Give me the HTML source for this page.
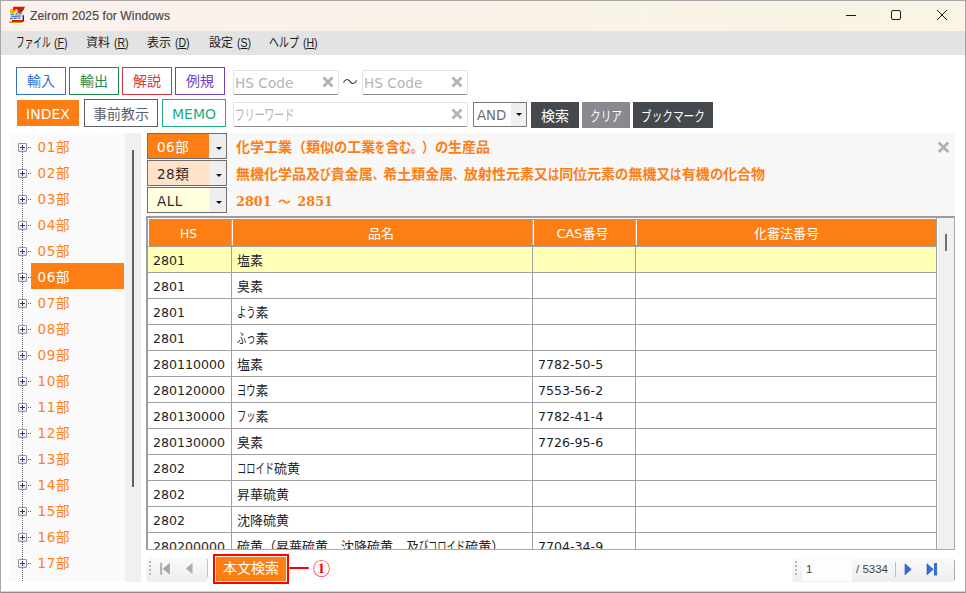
<!DOCTYPE html><html lang="ja"><head><meta charset="utf-8"><title>Zeirom 2025 for Windows</title><style>
html,body{margin:0;padding:0;}
body{width:966px;height:593px;overflow:hidden;background:#fff;position:relative;
 font-family:"DejaVu Sans","Noto Sans CJK JP",sans-serif;font-size:13.33px;color:#222;text-spacing-trim:space-all;}
*{box-sizing:border-box;}
.abs{position:absolute;}
.k{display:inline-block;transform:scaleX(.76);transform-origin:0 50%;white-space:nowrap;}
.k1{margin-right:-.24em}.k2{margin-right:-.48em}.k3{margin-right:-.72em}.k4{margin-right:-.96em}.k5{margin-right:-1.2em}.k6{margin-right:-1.44em}
#grid .k{font-size:14px;line-height:1;transform:scaleX(.66);}#grid .k1{margin-right:-.34em}#grid .k2{margin-right:-.68em}#grid .k4{margin-right:-1.36em}
#frame{left:0;top:0;width:966px;height:593px;border:1px solid #a6a6a6;border-bottom:1px solid #8c8c8c;box-shadow:inset 0 -1px 0 #d4d4d4;pointer-events:none;z-index:50;}
#title{left:1px;top:1px;width:964px;height:30px;background:linear-gradient(90deg,#fbf1ee 0%,#faf2e8 50%,#f9f4e3 100%);}
#title .t{left:29px;top:0;line-height:30px;-webkit-text-stroke:.2px #4a4a4a;font-family:"Liberation Sans","Noto Sans CJK JP",sans-serif;font-size:12.1px;color:#4a4a4a;letter-spacing:.1px;white-space:nowrap;}
#menu{left:1px;top:31px;width:964px;height:24px;background:#e3e3e3;font-family:"Liberation Sans","Noto Sans CJK JP",sans-serif;font-size:12px;color:#1a1a1a;}
#menu span.m{position:absolute;top:0;line-height:24px;white-space:nowrap;}#menu .l{display:inline-block;margin-left:.8px;font-size:12.6px;transform:scaleX(.84);transform-origin:0 50%;white-space:pre;}
.btn{position:absolute;height:28px;line-height:26px;text-align:center;border:1px solid;background:#fff;font-size:14px;white-space:nowrap;}
.inp{position:absolute;height:25px;background:#fff;border:1px solid #e2e2e2;border-bottom:1px solid #8f8f8f;border-radius:2px;color:#b4b4b4;font-size:13.7px;line-height:25px;padding-left:1px;white-space:nowrap;}
.inp .x{position:absolute;right:4px;top:5px;width:12px;height:12px;}
.dbtn{position:absolute;top:102px;height:26px;line-height:28px;color:#fff;text-align:center;font-size:14px;white-space:nowrap;}
#tree{left:9px;top:133px;width:116px;height:449px;background:#fafafa;overflow:hidden;}
#track{left:125px;top:133px;width:16px;height:449px;background:#f0f0f0;}
#thumb{left:132px;top:150px;width:2px;height:337px;background:#606060;}
.ti{position:absolute;left:0;width:116px;height:26px;}
.ti .lbl{position:absolute;left:22px;top:0;height:26px;width:93px;line-height:29px;padding-left:6.5px;letter-spacing:.6px;color:#ff7f1f;font-size:13.5px;white-space:nowrap;}
.ti.sel .lbl{background:#fd7e14;color:#fff;}
.ti .pm{position:absolute;left:9px;top:10px;width:9px;height:9px;border:1px solid #949494;background:linear-gradient(180deg,#fff 40%,#dcdcdc);border-radius:1px;}
.ti .pm:before{content:"";position:absolute;left:1px;top:3px;width:5px;height:1px;background:#1c3a8c;}
.ti .pm:after{content:"";position:absolute;left:3px;top:1px;width:1px;height:5px;background:#1c3a8c;}
.ti .hd{position:absolute;left:19px;top:14px;width:4px;height:1px;background-image:linear-gradient(90deg,#666 50%,transparent 50%);background-size:2px 1px;}
#vdot{left:13px;top:19px;width:1px;height:440px;background-image:linear-gradient(180deg,#666 50%,transparent 50%);background-size:1px 2px;}
#panel{left:147px;top:133px;width:808px;height:83px;background:#f8f8f8;}
.cmb{position:absolute;left:147px;width:80px;height:26px;border:1px solid #6e6e6e;font-size:13.5px;line-height:26px;}
.cmb .v{position:absolute;left:0;top:0;width:61px;height:24px;padding-left:9px;white-space:nowrap;letter-spacing:.5px;}
.cmb .a{position:absolute;left:61px;top:0;width:17px;height:24px;background:#eee;}
.arr{position:absolute;width:0;height:0;border-left:3px solid transparent;border-right:3px solid transparent;border-top:3px solid #111;}
.hl{position:absolute;left:236px;height:26px;line-height:26px;color:#fd7e14;font-weight:bold;font-size:14px;white-space:nowrap;font-family:"DejaVu Serif","Noto Sans CJK JP",sans-serif;}
#grid{left:146px;top:216px;width:809px;height:334px;background:#fff;overflow:hidden;border-left:2px solid #9c9ca0;border-top:2px solid #9c9ca0;border-right:1px solid #a8a8a8;border-bottom:1px solid #a8a8a8;}
#ghead{left:1px;top:1px;width:787px;height:27px;background:#fd7e14;color:#fff;font-size:13px;}
#ghead div{position:absolute;top:0;height:27px;line-height:30px;text-align:center;}
#ghead div.hv{top:1px;height:25px;width:1px;background:#fff;}#ghead div.hg{top:1px;height:25px;width:1px;background:#c8a890;}
#gline{left:0;top:28px;width:789px;height:1px;background:#a0a0a0;}
.row{position:absolute;left:0;width:789px;height:26px;border-bottom:1px solid #a0a0a0;font-size:12.6px;line-height:28px;white-space:nowrap;color:#1e1e1e;}
.row.y{background:#ffffb8;}
.row div{position:absolute;top:0;height:25px;overflow:hidden;}
.row div.n{font-size:13px;}
.vl{position:absolute;top:28px;width:1px;height:304px;background:#a0a0a0;}
#gtrack{left:788px;top:0;width:18px;height:331px;background:#f0f0f0;border-left:1px solid #a0a0a0;box-shadow:inset 1px 0 0 #fff;}
#gthumb{left:797px;top:16px;width:2px;height:17px;background:#707070;}
.tb{position:absolute;background:linear-gradient(180deg,#fafafa,#eeeeee);border-radius:4px;}
</style></head><body>
<div id="title" class="abs">
<svg class="abs" style="left:8px;top:5px" width="17" height="18" viewBox="0 0 17 18">
<path d="M1 3.2 L6 3.2 L6 7 L2 12 L1 12Z" fill="#d9c400"/>
<path d="M0.2 15.4 L13 15.4 L13 17 L0.2 17Z" fill="#b7a600"/>
<path d="M4.2 0.8 L16.2 0.8 L13.6 4.4 L4.2 4.4Z" fill="#ff0000"/>
<path d="M11.5 1.5 L14.5 1.5 L6.5 13 L3.5 13Z" fill="#6a5a00"/>
<path d="M12.5 3 L15 3 L8.5 12 L6 12Z" fill="#e00000"/>
<path d="M3 14 L15 14 L15 15.8 L3 15.8Z" fill="#ff0000"/>
<path d="M0.4 7.2 L13.6 6.4 L15.6 8 L15.6 13.6 L0.2 14Z" fill="#e9eff7" opacity=".8"/>
<path d="M2 8.4 L5 8.2 M6.4 8 L8.6 7.8 M10 7.8 L13 7.6 M1.2 12.6 L4 12.4 M5 12.4 L8 12.2 M9 12.2 L11.4 12.1 M2.4 10.4 L12.4 10" stroke="#3c72b4" stroke-width="1.1" fill="none"/>
<path d="M13.6 9.2 L15 9.2 L15 14.2 L13.6 14.2Z" fill="#1c2a5c"/>
<path d="M6.2 3 L8.6 3 L7.2 4.8Z" fill="#fff"/>
</svg>
<div class="t abs">Zeirom 2025 for Windows</div>
<svg class="abs" style="left:835px;top:0" width="129" height="30" viewBox="0 0 129 30">
<path d="M10 14.5 H20" stroke="#1a1a1a" stroke-width="1" fill="none"/>
<rect x="55.5" y="9.5" width="9" height="9" rx="1.5" stroke="#1a1a1a" stroke-width="1" fill="none"/>
<path d="M101 9 L111 19 M111 9 L101 19" stroke="#1a1a1a" stroke-width="1" fill="none"/>
</svg>
</div>
<div id="menu" class="abs">
<span class="m" style="left:14.5px"><span class="k" style="font-size:13.2px;transform:scaleX(0.655);margin-right:-1.38em">ファイル</span><span class="l"> (<u>F</u>)</span></span>
<span class="m" style="left:85px">資料<span class="l"> (<u>R</u>)</span></span>
<span class="m" style="left:146px">表示<span class="l"> (<u>D</u>)</span></span>
<span class="m" style="left:208px">設定<span class="l"> (<u>S</u>)</span></span>
<span class="m" style="left:268px"><span class="k" style="font-size:13.2px;transform:scaleX(0.755);margin-right:-0.74em">ヘルプ</span><span class="l"> (<u>H</u>)</span></span>
</div>
<div class="btn" style="left:16px;top:67px;width:50px;height:28px;line-height:27px;border-color:#3a6fc8;color:#3a6fc8;">輸入</div>
<div class="btn" style="left:69px;top:67px;width:50px;height:28px;line-height:27px;border-color:#1e8a50;color:#1e8a50;">輸出</div>
<div class="btn" style="left:122px;top:67px;width:50px;height:28px;line-height:27px;border-color:#dc3545;color:#dc3545;">解説</div>
<div class="btn" style="left:175px;top:67px;width:50px;height:28px;line-height:27px;border-color:#6f42c1;color:#6f42c1;">例規</div>
<div class="btn" style="left:17px;top:100px;width:62px;height:26px;line-height:26px;border-color:#fd7e14;color:#fff;background:#fd7e14;">INDEX</div>
<div class="btn" style="left:84px;top:99px;width:74px;height:28px;line-height:28px;border-color:#5a6068;color:#5a6068;">事前教示</div>
<div class="btn" style="left:162px;top:99px;width:64px;height:28px;line-height:28px;border-color:#20b080;color:#20b080;">MEMO</div>
<div class="inp" style="left:233px;top:70px;width:106px">HS Code<svg class="x" viewBox="0 0 12 12"><path d="M1.5 1.5 L10.5 10.5 M10.5 1.5 L1.5 10.5" stroke="#b4b4b4" stroke-width="2.9" fill="none"/></svg></div>
<div class="abs" style="left:342px;top:70px;width:16px;height:25px;line-height:25px;font-size:15px;font-weight:300;color:#111;text-align:center">～</div>
<div class="inp" style="left:362px;top:70px;width:106px">HS Code<svg class="x" viewBox="0 0 12 12"><path d="M1.5 1.5 L10.5 10.5 M10.5 1.5 L1.5 10.5" stroke="#b4b4b4" stroke-width="2.9" fill="none"/></svg></div>
<div class="inp" style="left:233px;top:102px;width:235px"><span class="k" style="font-size:15px;transform:scaleX(.655);margin-right:-2.07em">フリーワード</span><svg class="x" viewBox="0 0 12 12"><path d="M1.5 1.5 L10.5 10.5 M10.5 1.5 L1.5 10.5" stroke="#b4b4b4" stroke-width="2.9" fill="none"/></svg></div>
<div class="abs" style="left:473px;top:102px;width:54px;height:25px;border:1px solid #7a7a7a;background:#fff;font-size:13.33px;line-height:25px;color:#6e6e6e"><span style="position:absolute;left:3px">AND</span><div class="abs" style="left:37px;top:0;width:15px;height:23px;background:#efefef"></div><div class="arr" style="left:42px;top:10px"></div></div>
<div class="dbtn" style="left:531px;width:48px;background:#45494e">検索</div>
<div class="dbtn" style="left:582px;width:48px;background:#8a898f"><span class="k k3">クリア</span></div>
<div class="dbtn" style="left:633px;width:80px;background:#45494e"><span class="k k6">ブックマーク</span></div>
<div id="tree" class="abs"><div id="vdot" class="abs"></div>
<div class="ti" style="top:0px"><div class="hd"></div><div class="pm"></div><div class="lbl">01部</div></div>
<div class="ti" style="top:26px"><div class="hd"></div><div class="pm"></div><div class="lbl">02部</div></div>
<div class="ti" style="top:52px"><div class="hd"></div><div class="pm"></div><div class="lbl">03部</div></div>
<div class="ti" style="top:78px"><div class="hd"></div><div class="pm"></div><div class="lbl">04部</div></div>
<div class="ti" style="top:104px"><div class="hd"></div><div class="pm"></div><div class="lbl">05部</div></div>
<div class="ti sel" style="top:130px"><div class="hd"></div><div class="pm"></div><div class="lbl">06部</div></div>
<div class="ti" style="top:156px"><div class="hd"></div><div class="pm"></div><div class="lbl">07部</div></div>
<div class="ti" style="top:182px"><div class="hd"></div><div class="pm"></div><div class="lbl">08部</div></div>
<div class="ti" style="top:208px"><div class="hd"></div><div class="pm"></div><div class="lbl">09部</div></div>
<div class="ti" style="top:234px"><div class="hd"></div><div class="pm"></div><div class="lbl">10部</div></div>
<div class="ti" style="top:260px"><div class="hd"></div><div class="pm"></div><div class="lbl">11部</div></div>
<div class="ti" style="top:286px"><div class="hd"></div><div class="pm"></div><div class="lbl">12部</div></div>
<div class="ti" style="top:312px"><div class="hd"></div><div class="pm"></div><div class="lbl">13部</div></div>
<div class="ti" style="top:338px"><div class="hd"></div><div class="pm"></div><div class="lbl">14部</div></div>
<div class="ti" style="top:364px"><div class="hd"></div><div class="pm"></div><div class="lbl">15部</div></div>
<div class="ti" style="top:390px"><div class="hd"></div><div class="pm"></div><div class="lbl">16部</div></div>
<div class="ti" style="top:416px"><div class="hd"></div><div class="pm"></div><div class="lbl">17部</div></div>
<div class="ti" style="top:442px"><div class="hd"></div><div class="pm"></div><div class="lbl">18部</div></div>
</div><div id="track" class="abs"></div><div id="thumb" class="abs"></div>
<div id="panel" class="abs"></div>
<div class="cmb" style="top:133px;background:#fd7e14;color:#fff"><div class="v">06部</div><div class="a"></div><div class="arr" style="left:67.5px;top:12.5px"></div></div>
<div class="cmb" style="top:160px;background:#ffe2c8;color:#2c2c2c"><div class="v">28類</div><div class="a"></div><div class="arr" style="left:67.5px;top:12.5px"></div></div>
<div class="cmb" style="top:187px;background:#ffffe0;color:#2c2c2c"><div class="v">ALL</div><div class="a"></div><div class="arr" style="left:67.5px;top:12.5px"></div></div>
<div class="hl" style="top:134px">化学工業（類似<span class="k" style="transform:scaleX(0.95);margin-right:-0.05em">の</span>工業<span class="k" style="transform:scaleX(0.72);margin-right:-0.28em">を</span>含<span class="k" style="transform:scaleX(0.86);margin-right:-0.14em">む</span><span class="k" style="transform:scaleX(0.78);margin-right:-0.22em">。</span><span class="k" style="transform:scaleX(0.88);margin-right:-0.12em">）</span><span class="k" style="transform:scaleX(0.95);margin-right:-0.05em">の</span>生産品</div>
<div class="hl" style="top:161px">無機化学品及<span class="k" style="transform:scaleX(0.76);margin-right:-0.24em">び</span>貴金属<span class="k" style="transform:scaleX(0.76);margin-right:-0.24em">、</span>希土類金属<span class="k" style="transform:scaleX(0.76);margin-right:-0.24em">、</span>放射性元素又<span class="k" style="transform:scaleX(0.8);margin-right:-0.20em">は</span>同位元素<span class="k" style="transform:scaleX(0.95);margin-right:-0.05em">の</span>無機又<span class="k" style="transform:scaleX(0.8);margin-right:-0.20em">は</span>有機<span class="k" style="transform:scaleX(0.95);margin-right:-0.05em">の</span>化合物</div>
<div class="hl" style="top:189px;font-size:12.8px;word-spacing:2px">2801 ～ 2851</div>
<svg class="abs" style="left:937px;top:140.5px" width="13" height="12.5" viewBox="0 0 13 12.5"><path d="M1.7 1.5 L11.3 11 M11.3 1.5 L1.7 11" stroke="#b2b2b2" stroke-width="2.9" fill="none"/></svg>
<div id="grid" class="abs">
<div id="ghead" class="abs"><div style="left:0;width:82px;font-size:12.3px;padding-right:3px">HS</div><div class="hg" style="left:82px"></div><div class="hv" style="left:83px"></div><div style="left:84px;width:299px;padding-right:3px">品名</div><div class="hg" style="left:383px"></div><div class="hv" style="left:384px"></div><div style="left:385px;width:101px;padding-right:4px">CAS番号</div><div class="hg" style="left:486px"></div><div class="hv" style="left:487px"></div><div style="left:488px;width:299px">化審法番号</div></div>
<div id="gline" class="abs"></div>
<div class="row y" style="top:29px"><div style="left:5px;width:79px">2801</div><div class="n" style="left:89px;width:294px">塩素</div><div style="left:390px;width:96px"></div></div>
<div class="row" style="top:55px"><div style="left:5px;width:79px">2801</div><div class="n" style="left:89px;width:294px">臭素</div><div style="left:390px;width:96px"></div></div>
<div class="row" style="top:81px"><div style="left:5px;width:79px">2801</div><div class="n" style="left:89px;width:294px"><span class="k k2">よう</span>素</div><div style="left:390px;width:96px"></div></div>
<div class="row" style="top:107px"><div style="left:5px;width:79px">2801</div><div class="n" style="left:89px;width:294px"><span class="k k2">ふっ</span>素</div><div style="left:390px;width:96px"></div></div>
<div class="row" style="top:133px"><div style="left:5px;width:79px">280110000</div><div class="n" style="left:89px;width:294px">塩素</div><div style="left:390px;width:96px">7782-50-5</div></div>
<div class="row" style="top:159px"><div style="left:5px;width:79px">280120000</div><div class="n" style="left:89px;width:294px"><span class="k k2">ヨウ</span>素</div><div style="left:390px;width:96px">7553-56-2</div></div>
<div class="row" style="top:185px"><div style="left:5px;width:79px">280130000</div><div class="n" style="left:89px;width:294px"><span class="k k2">フッ</span>素</div><div style="left:390px;width:96px">7782-41-4</div></div>
<div class="row" style="top:211px"><div style="left:5px;width:79px">280130000</div><div class="n" style="left:89px;width:294px">臭素</div><div style="left:390px;width:96px">7726-95-6</div></div>
<div class="row" style="top:237px"><div style="left:5px;width:79px">2802</div><div class="n" style="left:89px;width:294px"><span class="k k4">コロイド</span>硫黄</div><div style="left:390px;width:96px"></div></div>
<div class="row" style="top:263px"><div style="left:5px;width:79px">2802</div><div class="n" style="left:89px;width:294px">昇華硫黄</div><div style="left:390px;width:96px"></div></div>
<div class="row" style="top:289px"><div style="left:5px;width:79px">2802</div><div class="n" style="left:89px;width:294px">沈降硫黄</div><div style="left:390px;width:96px"></div></div>
<div class="row" style="top:315px"><div style="left:5px;width:79px">280200000</div><div class="n" style="left:89px;width:294px">硫黄（昇華硫黄、沈降硫黄、及<span class="k k1">び</span><span class="k k4">コロイド</span>硫黄）</div><div style="left:390px;width:96px">7704-34-9</div></div>
<div class="vl" style="left:83px"></div>
<div class="vl" style="left:384px"></div>
<div class="vl" style="left:487px"></div>
<div id="gtrack" class="abs"></div><div id="gthumb" class="abs"></div>
</div>
<div class="tb" style="left:146px;top:557px;width:62px;height:25px"></div>
<svg class="abs" style="left:146px;top:553px" width="64" height="29" viewBox="0 0 64 29">
<g fill="#b6b6b6"><rect x="3" y="8" width="2" height="2"/><rect x="3" y="12" width="2" height="2"/><rect x="3" y="16" width="2" height="2"/><rect x="3" y="20" width="2" height="2"/></g>
<rect x="14" y="9.8" width="2.2" height="12" fill="#b4b4b4"/><path d="M23.8 9.8 L16.8 15.8 L23.8 21.8Z" fill="#a6a6a6"/>
<path d="M46.5 9.8 L39.8 15.5 L46.5 21.2Z" fill="#aeaeae"/>
<path d="M61.5 6 V24" stroke="#c4c4c4" stroke-width="1" fill="none"/>
</svg>
<div class="abs" style="left:213px;top:554px;width:76px;height:30px;border:2px solid #ff0000;background:#fd7e14;"><div class="abs" style="left:0;top:0;width:72px;height:26px;border:1px solid #fff0e0;color:#fff;font-size:14px;line-height:23px;text-align:center;white-space:nowrap">本文検索</div></div>
<div class="abs" style="left:289px;top:567px;width:20px;height:2px;background:#ff0000;border-radius:1px"></div>
<div class="abs" style="left:309.5px;top:553.7px;width:24px;height:28px;line-height:28px;text-align:center;color:#ff0000;font-weight:900;font-size:17.2px;font-family:'Noto Serif CJK SC',serif">①</div>
<div class="tb" style="left:792px;top:557px;width:163px;height:25px"></div><div class="abs" style="left:954px;top:560px;width:1px;height:20px;background:#a8a8a8"></div>
<div class="abs" style="left:802px;top:558px;width:50px;height:23px;background:#fdfdfd;font-size:11.5px;line-height:23px;padding-left:4px;font-family:'Liberation Sans',sans-serif;color:#444">1</div>
<div class="abs" style="left:856px;top:558px;height:23px;font-size:11.5px;line-height:23px;font-family:'Liberation Sans',sans-serif;color:#444;white-space:nowrap">/ 5334</div>
<svg class="abs" style="left:792px;top:557px" width="163" height="25" viewBox="0 0 163 25">
<g fill="#b6b6b6"><rect x="3" y="4" width="2" height="2"/><rect x="3" y="8" width="2" height="2"/><rect x="3" y="12" width="2" height="2"/><rect x="3" y="16" width="2" height="2"/></g>
<path d="M103.5 5 V20" stroke="#bdbdbd" stroke-width="1" fill="none"/>
<path d="M113 6.8 L119.2 12.3 L113 17.8Z" fill="#2f6fe0" stroke="#1c4fb8" stroke-width=".6"/>
<path d="M135 6.8 L141.2 12.3 L135 17.8Z" fill="#2f6fe0" stroke="#1c4fb8" stroke-width=".6"/>
<rect x="142.2" y="6.3" width="2.6" height="11.8" fill="#2f6fe0" stroke="#1c4fb8" stroke-width=".5"/>
</svg>
<div id="frame" class="abs"></div>
</body></html>
